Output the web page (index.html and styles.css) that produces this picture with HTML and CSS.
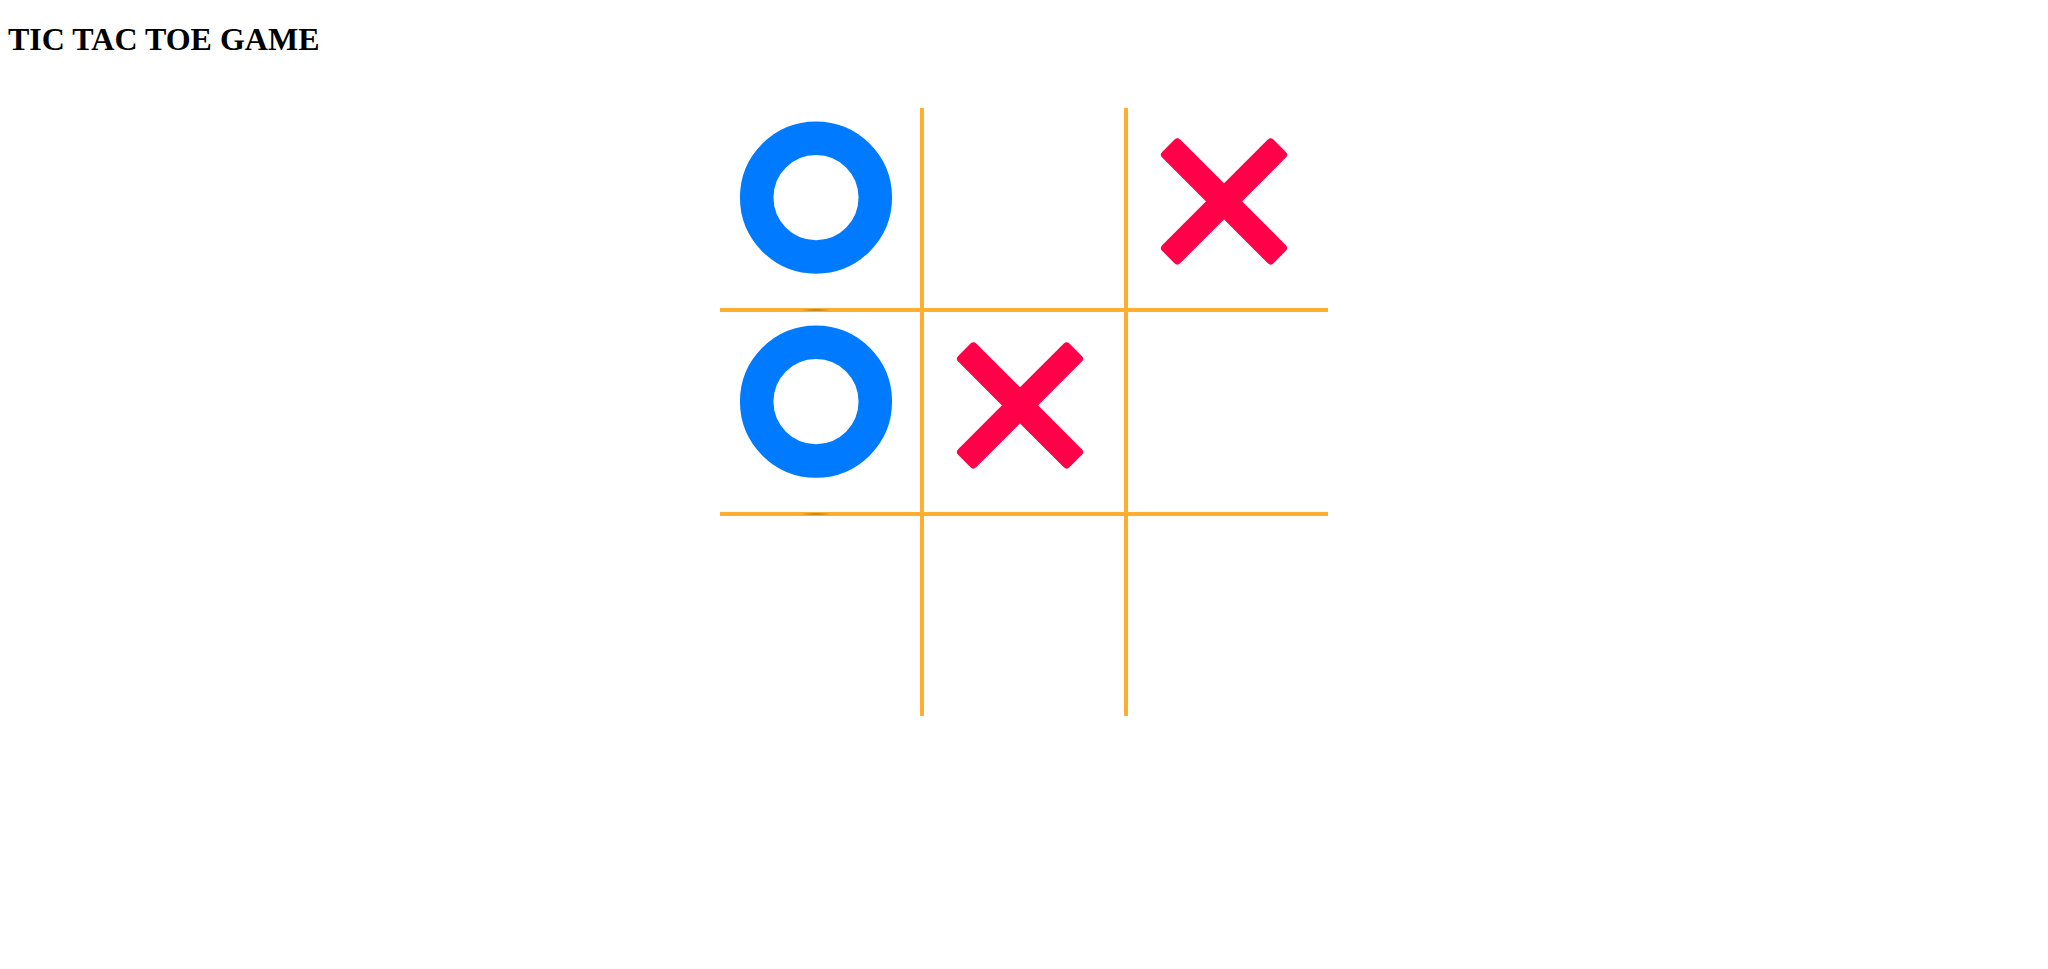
FILE: index.html
```html
<!DOCTYPE html>
<html lang="en">
<head>
<meta charset="utf-8">
<title>Tic Tac Toe Game</title>
<link rel="stylesheet" href="styles.css">
</head>
<body>
<h1 class="title">TIC TAC TOE GAME</h1>
<div class="board">
  <div class="cell">
    <svg class="mark" viewBox="0 0 200 200" width="200" height="200"><circle class="o" cx="96" cy="89.6" r="59.3"/></svg>
    <span class="shade"></span>
  </div>
  <div class="cell"></div>
  <div class="cell">
    <svg class="mark" viewBox="0 0 200 200" width="200" height="200"><g class="x" transform="translate(96 93.4)"><rect x="-78.7" y="-12.75" width="157.4" height="25.5" rx="4" transform="rotate(45)"/><rect x="-78.7" y="-12.75" width="157.4" height="25.5" rx="4" transform="rotate(-45)"/></g></svg>
  </div>
  <div class="cell">
    <svg class="mark" viewBox="0 0 200 200" width="200" height="200"><circle class="o" cx="96" cy="89.6" r="59.3"/></svg>
    <span class="shade"></span>
  </div>
  <div class="cell">
    <svg class="mark" viewBox="0 0 200 200" width="200" height="200"><g class="x" transform="translate(96 93.4)"><rect x="-78.7" y="-12.75" width="157.4" height="25.5" rx="4" transform="rotate(45)"/><rect x="-78.7" y="-12.75" width="157.4" height="25.5" rx="4" transform="rotate(-45)"/></g></svg>
  </div>
  <div class="cell"></div>
  <div class="cell"></div>
  <div class="cell"></div>
  <div class="cell"></div>
</div>
</body>
</html>
```
FILE: styles.css
```css
html, body {
  background: #ffffff;
}
body {
  margin: 0;
  padding: 0 8px;
  font-family: "Liberation Serif", "Times New Roman", serif;
}
.title {
  margin: 21px 0 0;
  font-size: 32px;
  line-height: 37px;
  font-weight: bold;
  color: #000000;
}
.board {
  margin: 50px auto 0;
  width: 608px;
  display: grid;
  grid-template-columns: repeat(3, 200px);
  grid-template-rows: repeat(3, 200px);
  gap: 4px;
  background: #ffae2f;
}
.cell {
  position: relative;
  background: #ffffff;
}
.mark {
  display: block;
}
.o {
  fill: none;
  stroke: #007bff;
  stroke-width: 33.5;
}
.x {
  fill: #ff0049;
}
.shade {
  position: absolute;
  left: 82px;
  top: 201px;
  width: 28px;
  height: 2px;
  border-radius: 50%;
  background: radial-gradient(ellipse at center, rgba(90, 70, 20, 0.55) 0%, rgba(90, 70, 20, 0.25) 55%, rgba(90, 70, 20, 0) 100%);
}
```
